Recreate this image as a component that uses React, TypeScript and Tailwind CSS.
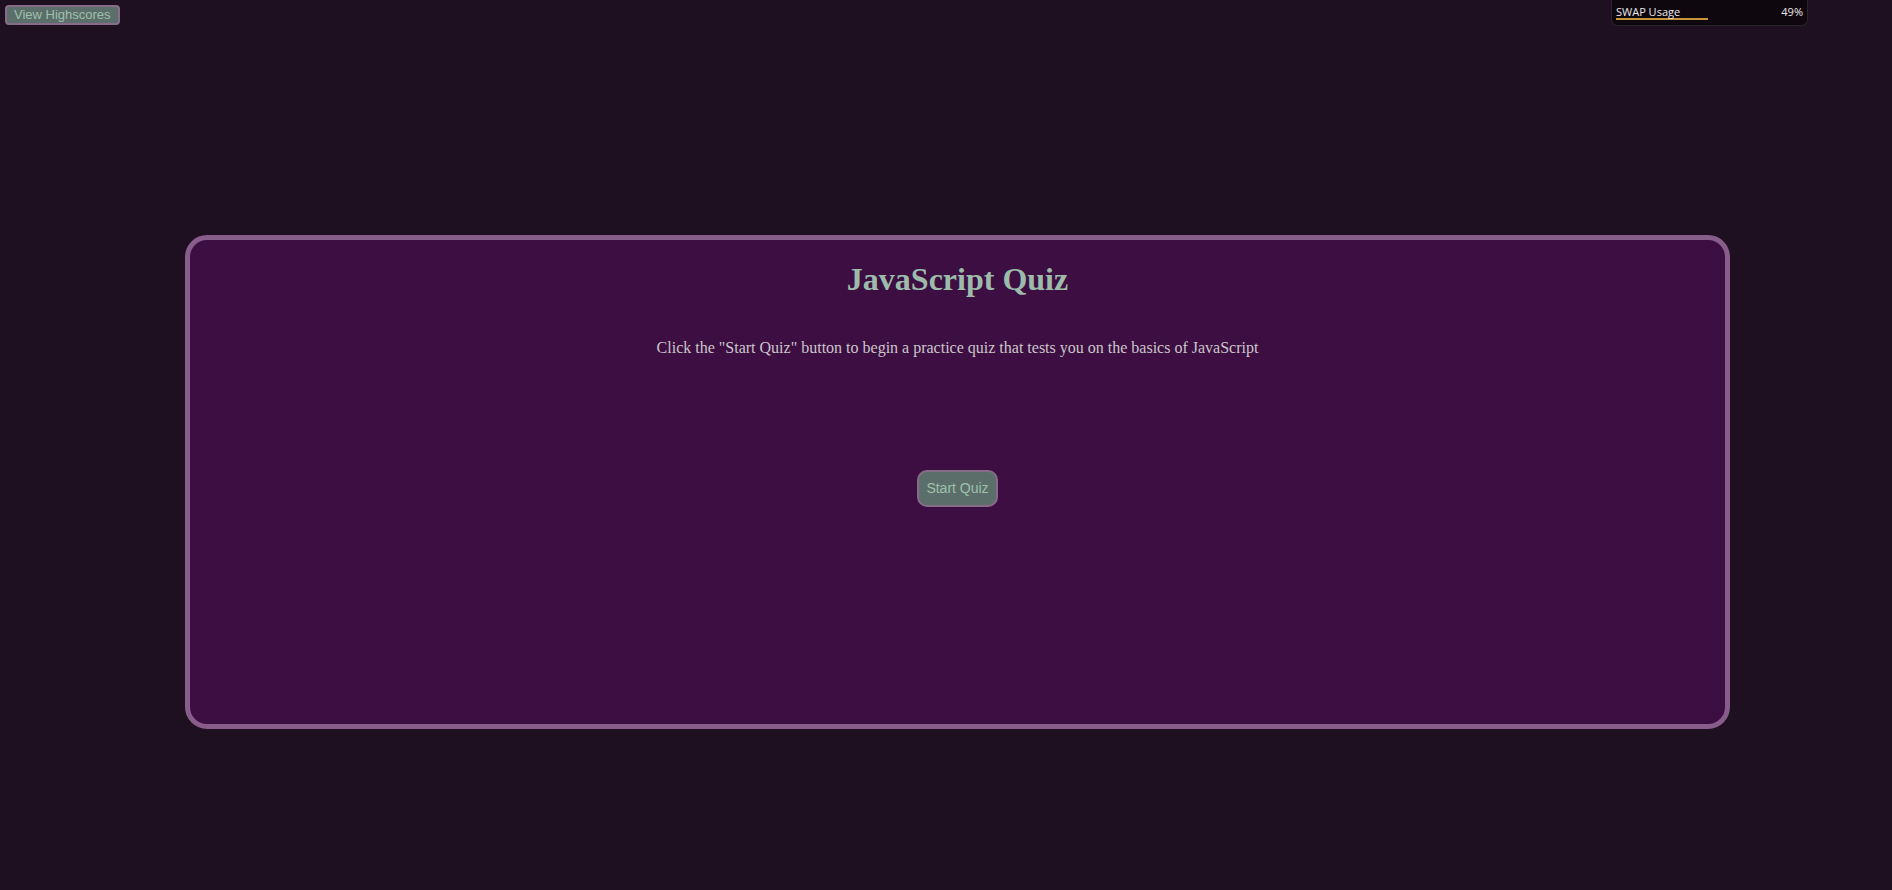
const SWAP_PERCENT = 49;

function SwapWidget() {
  return (
    <div className="absolute left-[1611px] top-0 w-[197px] h-[26px] rounded-b-[6px] border border-t-0 border-[#2b2230] bg-[#0e080e] px-[4px]">
      <div className="flex items-center justify-between pt-[6px] text-[11px] leading-[12px] text-[#ece6ec] font-['Open_Sans',sans-serif]">
        <span>SWAP Usage</span>
        <span>{SWAP_PERCENT}%</span>
      </div>
      <div className="h-[2px] w-full">
        <div className="h-full bg-[#c99437]" style={{ width: `${SWAP_PERCENT}%` }} />
      </div>
    </div>
  );
}

export default function App() {
  return (
    <div className="relative min-h-[890px] w-full bg-[#1f1021] font-['Liberation_Serif',serif]">
      <header className="flex px-[5px] pt-[5px]">
        <button
          type="button"
          className="h-[20px] rounded-[4px] border-2 border-[#866c88] bg-[#5c6e69] px-[7px] font-['Liberation_Sans',sans-serif] text-[13px] leading-[16px] text-[#9ec0ae]"
        >
          View Highscores
        </button>
      </header>
      <SwapWidget />
      <main className="ml-[185px] mr-[162px] mt-[210px]">
        <section className="flex h-[494px] flex-col items-center rounded-[22px] border-[5px] border-[#885c8b] bg-[#3d0e41]">
          <h1 className="mt-[21px] text-[32px] font-bold leading-[37px] text-[#9cbbab]">
            JavaScript Quiz
          </h1>
          <p className="mt-[41px] text-[16px] leading-[18px] text-[#cbc6cb]">
            Click the "Start Quiz" button to begin a practice quiz that tests you on the basics of JavaScript
          </p>
          <button
            type="button"
            className="mt-[113px] h-[37px] w-[81px] rounded-[10px] border-2 border-[#866c88] bg-[#5c6e69] font-['Liberation_Sans',sans-serif] text-[14px] text-[#9ec0ae]"
          >
            Start Quiz
          </button>
        </section>
      </main>
    </div>
  );
}
